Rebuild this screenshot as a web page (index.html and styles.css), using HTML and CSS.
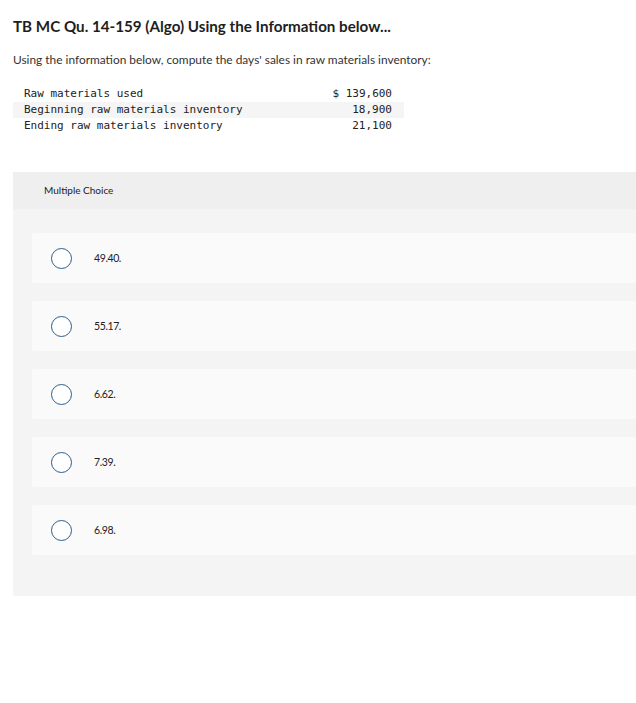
FILE: index.html
```html
<!DOCTYPE html>
<html>
<head>
<meta charset="utf-8">
<link rel="stylesheet" href="styles.css">
</head>
<body>
<div class="page">
  <h1 class="title">TB MC Qu. 14-159 (Algo) Using the Information below...</h1>
  <p class="prompt">Using the information below, compute the days' sales in raw materials inventory:</p>
  <table class="data">
    <tr><td class="label">Raw materials used</td><td class="num">$ 139,600</td></tr>
    <tr class="shade"><td class="label">Beginning raw materials inventory</td><td class="num">18,900</td></tr>
    <tr><td class="label">Ending raw materials inventory</td><td class="num">21,100</td></tr>
  </table>
  <div class="panel">
    <div class="panel-head">Multiple Choice</div>
    <div class="options">
      <div class="option"><span class="radio"></span><span class="opt-text">49.40.</span></div>
      <div class="option"><span class="radio"></span><span class="opt-text">55.17.</span></div>
      <div class="option"><span class="radio"></span><span class="opt-text">6.62.</span></div>
      <div class="option"><span class="radio"></span><span class="opt-text">7.39.</span></div>
      <div class="option"><span class="radio"></span><span class="opt-text">6.98.</span></div>
    </div>
  </div>
</div>
</body>
</html>
```

FILE: styles.css
```css
html, body {
  margin: 0;
  padding: 0;
  background: #fff;
}
body {
  font-family: "Lato", "Liberation Sans", sans-serif;
  color: #1a1a1a;
}
.page {
  padding: 16px 0 0 13px;
}
.title {
  margin: 0;
  font-size: 15.2px;
  font-weight: 700;
  line-height: 20px;
  color: #1e1e1e;
}
.prompt {
  margin: 16px 0 0 0;
  font-size: 11.9px;
  line-height: 16px;
  color: #333;
}
.data {
  margin-top: 18px;
  border-collapse: collapse;
  font-family: "DejaVu Sans Mono", "Liberation Mono", monospace;
  font-size: 11px;
  color: #222;
}
.data td {
  padding: 0;
  height: 16px;
  line-height: 16px;
}
.data .label {
  padding-left: 11px;
  width: 290px;
}
.data .num {
  text-align: right;
  width: 78px;
  padding-right: 12px;
}
.data .shade td {
  background: #f5f5f5;
}
.panel {
  margin-top: 38px;
  background: #f4f4f4;
  border-radius: 2px 0 0 2px;
  padding-bottom: 41px;
}
.panel-head {
  background: #efefef;
  height: 37px;
  line-height: 37px;
  padding-left: 31px;
  font-size: 10px;
  color: #222;
}
.options {
  padding: 24px 0 0 19px;
  display: flex;
  flex-direction: column;
  gap: 18px;
}
.option {
  background: #fafafa;
  height: 50px;
  display: flex;
  align-items: center;
  border-radius: 2px 0 0 2px;
}
.radio {
  width: 19px;
  height: 19px;
  border: 1.5px solid #2c5d8d;
  border-radius: 50%;
  background: #fff;
  margin-left: 19px;
  flex: none;
}
.opt-text {
  margin-left: 22px;
  font-size: 10.5px;
  letter-spacing: -0.4px;
  color: #222;
}
```
